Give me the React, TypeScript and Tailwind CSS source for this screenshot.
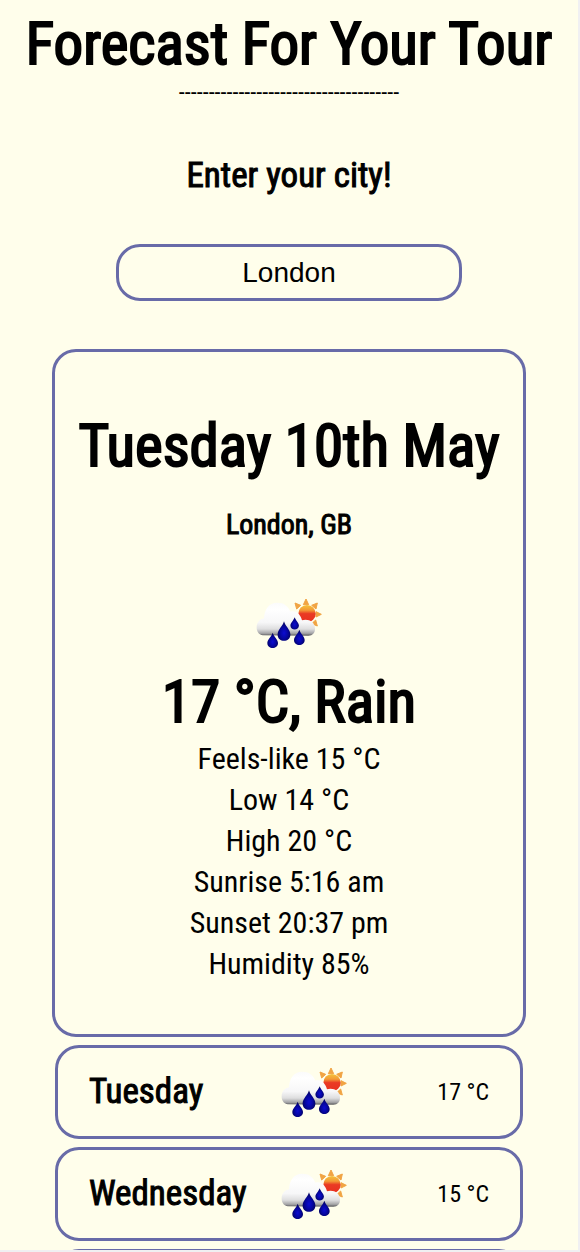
import { useState } from "react";

const details = [
  "Feels-like 15 °C",
  "Low 14 °C",
  "High 20 °C",
  "Sunrise 5:16 am",
  "Sunset 20:37 pm",
  "Humidity 85%",
];

const days = [
  { name: "Tuesday", temp: "17 °C" },
  { name: "Wednesday", temp: "15 °C" },
  { name: "Thursday", temp: "16 °C" },
];

const drop = "M0 -23 C3 -12 16 -3 16 8 C16 18 8 23 0 23 C-8 23 -16 18 -16 8 C-16 -3 -3 -12 0 -23Z";

function RainIcon({ id }: { id: string }) {
  return (
    <svg viewBox="45 52 198 156" className="h-[52px] w-[66px] shrink-0" role="img" aria-label="Rain">
      <defs>
        <linearGradient id={`${id}-cloud`} x1="0" y1="0" x2="0" y2="1">
          <stop offset="0" stopColor="#fbfbfb" />
          <stop offset="0.2" stopColor="#ffffff" />
          <stop offset="0.6" stopColor="#f7f7f8" />
          <stop offset="0.8" stopColor="#dededf" />
          <stop offset="0.93" stopColor="#a4a4a6" />
          <stop offset="1" stopColor="#58585a" />
        </linearGradient>
        <linearGradient id={`${id}-sun`} x1="0" y1="0" x2="0" y2="1">
          <stop offset="0" stopColor="#f5c33c" />
          <stop offset="0.3" stopColor="#f39a35" />
          <stop offset="0.5" stopColor="#ea3a24" />
          <stop offset="1" stopColor="#e83020" />
        </linearGradient>
        <radialGradient id={`${id}-drop`} cx="0.5" cy="0.6" r="0.55">
          <stop offset="0" stopColor="#0c0cd0" />
          <stop offset="0.5" stopColor="#0606a4" />
          <stop offset="1" stopColor="#03035c" />
        </radialGradient>
      </defs>
      <g fill="#f1a443" stroke="#f1a443" strokeWidth="3" strokeLinejoin="round">
        <path d="M195 58 L203 75 L187 75Z" />
        <path d="M229 70 L225 88 L212 77Z" />
        <path d="M241 104 L225 112 L225 96Z" />
        <path d="M229 139 L212 132 L224 121Z" />
        <path d="M162 70 L179 77 L167 88Z" />
      </g>
      <circle cx="198" cy="102" r="26" fill={`url(#${id}-sun)`} />
      <path
        d="M66 167 C52 165 46 153 47 141 C48 127 57 119 69 116 C70 89 84 69 108 69 C129 69 142 79 148 96 C162 91 178 101 183 122 C201 116 222 126 222 147 C222 160 215 167 202 168Z"
        fill={`url(#${id}-cloud)`}
      />
      <g fill={`url(#${id}-drop)`}>
        <path d={drop} transform="translate(95 182)" />
        <path d={drop} transform="translate(129 154) scale(1.2 1.28)" />
        <path d={drop} transform="translate(161 131) scale(0.8)" />
        <path d={drop} transform="translate(175 173)" />
      </g>
    </svg>
  );
}

export default function App() {
  const [city, setCity] = useState("London");

  return (
    <main className="flex h-screen flex-col items-center overflow-y-auto border-r-2 border-b-2 border-[#f0f0f2] bg-[#fffeeb] text-center font-['Roboto_Condensed','Roboto',sans-serif] text-black [scrollbar-width:none]">
      <h1 className="mt-2 shrink-0 text-[59px] leading-[72px] font-normal whitespace-nowrap [-webkit-text-stroke:2px_black]">
        Forecast For Your Tour
      </h1>
      <p className="shrink-0 text-[24px] leading-6">-------------------------------------</p>

      <form className="mt-12 flex w-full shrink-0 flex-col items-center" onSubmit={(e) => e.preventDefault()}>
        <label htmlFor="city" className="text-[35px] leading-[48px] [-webkit-text-stroke:1px_black]">
          Enter your city!
        </label>
        <input
          id="city"
          type="text"
          value={city}
          onChange={(e) => setCity(e.target.value)}
          className="mt-11 h-[57px] w-3/5 rounded-[24px] border-[3px] border-[#686ba8] bg-transparent text-center font-['Liberation_Sans',sans-serif] text-[28px] outline-none"
        />
      </form>

      <section className="mt-12 flex w-[82%] shrink-0 flex-col items-center rounded-[24px] border-[3px] border-[#686ba8] pt-[58px] pb-[50px]">
        <h2 className="text-[59px] leading-[72px] font-normal whitespace-nowrap [-webkit-text-stroke:2px_black]">
          Tuesday 10th May
        </h2>
        <h3 className="mt-[25px] mb-[54px] text-[28px] leading-9 font-normal [-webkit-text-stroke:1px_black]">London, GB</h3>
        <RainIcon id="today" />
        <p className="mt-[17px] text-[59px] leading-[72px] whitespace-nowrap [-webkit-text-stroke:2px_black]">17 °C, Rain</p>
        <ul className="text-[30px] leading-[41px]">
          {details.map((text) => (
            <li key={text}>{text}</li>
          ))}
        </ul>
      </section>

      <ul className="mt-2 flex w-[81%] shrink-0 flex-col gap-2">
        {days.map((day) => (
          <li key={day.name} className="flex h-[94px] items-center rounded-[24px] border-[3px] border-[#686ba8] px-[31px]">
            <h3 className="w-[48%] text-left text-[35px] leading-[48px] font-normal [-webkit-text-stroke:1px_black]">
              {day.name}
            </h3>
            <RainIcon id={day.name} />
            <span className="ml-auto text-[24px] leading-8">{day.temp}</span>
          </li>
        ))}
      </ul>
    </main>
  );
}
